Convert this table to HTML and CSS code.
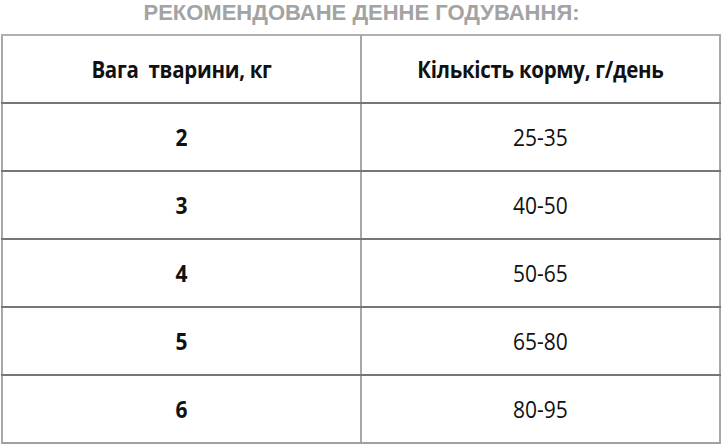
FILE: index.html
```html
<!DOCTYPE html>
<html lang="uk">
<head>
<meta charset="utf-8">
<link rel="stylesheet" href="styles.css">
</head>
<body>
<div class="page">
  <h2 class="title">РЕКОМЕНДОВАНЕ ДЕННЕ ГОДУВАННЯ:</h2>
  <table class="feed">
    <thead>
      <tr><th><span class="txt">Вага&nbsp; тварини, кг</span></th><th><span class="txt">Кількість корму, г/день</span></th></tr>
    </thead>
    <tbody>
      <tr><td class="w"><span class="txt">2</span></td><td><span class="txt">25-35</span></td></tr>
      <tr><td class="w"><span class="txt">3</span></td><td><span class="txt">40-50</span></td></tr>
      <tr><td class="w"><span class="txt">4</span></td><td><span class="txt">50-65</span></td></tr>
      <tr><td class="w"><span class="txt">5</span></td><td><span class="txt">65-80</span></td></tr>
      <tr><td class="w"><span class="txt">6</span></td><td><span class="txt">80-95</span></td></tr>
    </tbody>
  </table>
</div>
</body>
</html>
```
FILE: styles.css
```css
html, body {
  margin: 0;
  padding: 0;
  background: #ffffff;
}
.page {
  width: 722px;
  height: 445px;
  overflow: hidden;
  padding-left: 1px;
  box-sizing: border-box;
}
.title {
  margin: 0;
  height: 34px;
  box-sizing: border-box;
  padding-top: 1px;
  font-family: "Liberation Sans", Arial, sans-serif;
  font-weight: bold;
  font-size: 22px;
  line-height: 24px;
  color: #a3a3a3;
  text-align: center;
  letter-spacing: 0;
}
.feed {
  width: 720px;
  border-collapse: collapse;
  table-layout: fixed;
  font-family: "Open Sans", "Noto Sans", sans-serif;
  color: #111111;
}
.feed th, .feed td {
  width: 50%;
  height: 66px;
  padding: 0;
  text-align: center;
  vertical-align: middle;
  border-left: 2px solid #a8a8a8;
  border-right: 2px solid #a8a8a8;
  border-top: 2px solid #767676;
  border-bottom: 2px solid #767676;
}
.feed thead th {
  border-top: 2px solid #b0b0b0;
  font-weight: bold;
  font-size: 20.5px;
  letter-spacing: -0.3px;
}
.feed tbody tr:last-child td {
  border-bottom: 2px solid #a0a0a0;
}
.feed td {
  font-size: 21px;
  font-weight: normal;
}
.feed td.w {
  font-weight: bold;
}
.txt {
  display: inline-block;
  transform: scaleY(1.1);
}
```
